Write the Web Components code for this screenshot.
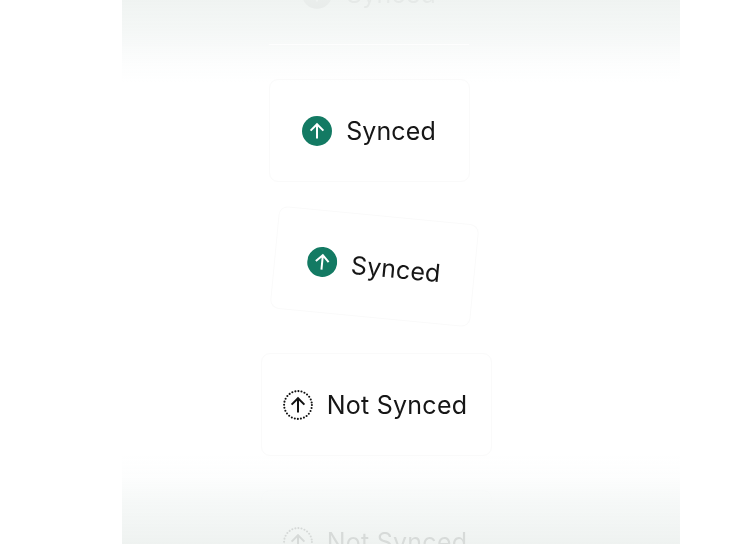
<!DOCTYPE html>
<html>
<head>
<meta charset="utf-8">
<title>Sync status</title>
<style>
    html, body {
        margin: 0;
        background: #fff;
        height: 100%;
        overflow: hidden;
    }
</style>
</head>
<body>
<sync-stage>
    <sync-card state="synced">Synced</sync-card>
    <sync-card state="synced">Synced</sync-card>
    <sync-card state="synced" tilted>Synced</sync-card>
    <sync-card state="off">Not Synced</sync-card>
    <sync-card state="off">Not Synced</sync-card>
</sync-stage>

<script>
const stageTemplate = document.createElement("template");

stageTemplate.innerHTML = `
<style>
    :host {
        display: block;
        position: relative;
        width: 558px;
        height: 544px;
        margin-left: 122px;
        overflow: hidden;
    }

    .list {
        display: flex;
        flex-direction: column;
        align-items: flex-start;
        gap: 34px;
        margin-top: -58px;
        padding-left: 147px;
    }

    .fade {
        position: absolute;
        left: 0;
        right: 0;
    }

    .fade.top {
        top: 0;
        height: 82px;
        backdrop-filter: grayscale(1) blur(.5px);
        background:
            linear-gradient(rgba(255,255,255,.8), rgba(255,255,255,.8)) 147px 44px / 200px 1px no-repeat,
            linear-gradient(to bottom, rgba(239,243,241,.96) 0%, rgba(244,247,246,.92) 40%, rgba(251,252,252,.75) 75%, rgba(255,255,255,0) 100%);
    }

    .fade.bottom {
        bottom: 0;
        height: 90px;
        backdrop-filter: grayscale(1) blur(.5px);
        background: linear-gradient(to top, rgba(237,241,239,.9) 0%, rgba(244,247,246,.86) 45%, rgba(251,252,252,.6) 75%, rgba(255,255,255,0) 100%);
    }
</style>
<div class="list"><slot></slot></div>
<div class="fade top"></div>
<div class="fade bottom"></div>
`;

class SyncStage extends HTMLElement {
    constructor() {
        super();
        this.attachShadow({ mode: "open" });
        this.shadowRoot.appendChild(stageTemplate.content.cloneNode(true));
    }
}
window.customElements.define("sync-stage", SyncStage);

const iconTemplate = document.createElement("template");

iconTemplate.innerHTML = `
<style>
    :host {
        display: block;
        width: 30px;
        height: 30px;
        flex: none;
    }

    svg {
        display: block;
    }
</style>
<svg width="30" height="30" viewBox="0 0 30 30" fill="none"></svg>
`;

class SyncIcon extends HTMLElement {
    static get observedAttributes() {
        return ["state"];
    }

    constructor() {
        super();
        this.attachShadow({ mode: "open" });
        this.shadowRoot.appendChild(iconTemplate.content.cloneNode(true));
    }

    attributeChangedCallback() {
        const svg = this.shadowRoot.querySelector("svg");
        const arrow = "M15 22.6V8.2M8.6 14.6L15 8.2l6.4 6.4";
        if (this.getAttribute("state") === "off") {
            svg.innerHTML = `
                <circle cx="15" cy="15" r="13.9" stroke="#111" stroke-width="2.1" stroke-linecap="round" stroke-dasharray="0 3.12"/>
                <path d="${arrow}" stroke="#111" stroke-width="2"/>`;
        } else {
            svg.innerHTML = `
                <circle cx="15" cy="15" r="15" fill="#137a63"/>
                <path d="${arrow}" stroke="#fff" stroke-width="2"/>`;
        }
    }
}
window.customElements.define("sync-icon", SyncIcon);

const cardTemplate = document.createElement("template");

cardTemplate.innerHTML = `
<style>
    :host {
        display: flex;
        align-items: center;
        justify-content: center;
        gap: 14px;
        box-sizing: border-box;
        width: 201px;
        height: 103px;
        padding-right: 1px;
        background: #fff;
        border: 1px solid #fafafa;
        border-radius: 9px;
        font-family: "Inter", "Liberation Sans", sans-serif;
        font-size: 25px;
        letter-spacing: 0.1px;
        color: #161616;
        white-space: nowrap;
    }

    :host([state="off"]) {
        width: 231px;
        margin-left: -8px;
        padding-right: 3px;
        letter-spacing: 0.25px;
    }

    :host([tilted]) {
        margin-left: 5px;
        transform: translateY(-1px) rotate(5.5deg);
    }
</style>
<sync-icon></sync-icon>
<span><slot></slot></span>
`;

class SyncCard extends HTMLElement {
    constructor() {
        super();
        this.attachShadow({ mode: "open" });
        this.shadowRoot.appendChild(cardTemplate.content.cloneNode(true));
    }

    connectedCallback() {
        const icon = this.shadowRoot.querySelector("sync-icon");
        icon.setAttribute("state", this.getAttribute("state") || "synced");
    }
}
window.customElements.define("sync-card", SyncCard);
</script>
</body>
</html>
